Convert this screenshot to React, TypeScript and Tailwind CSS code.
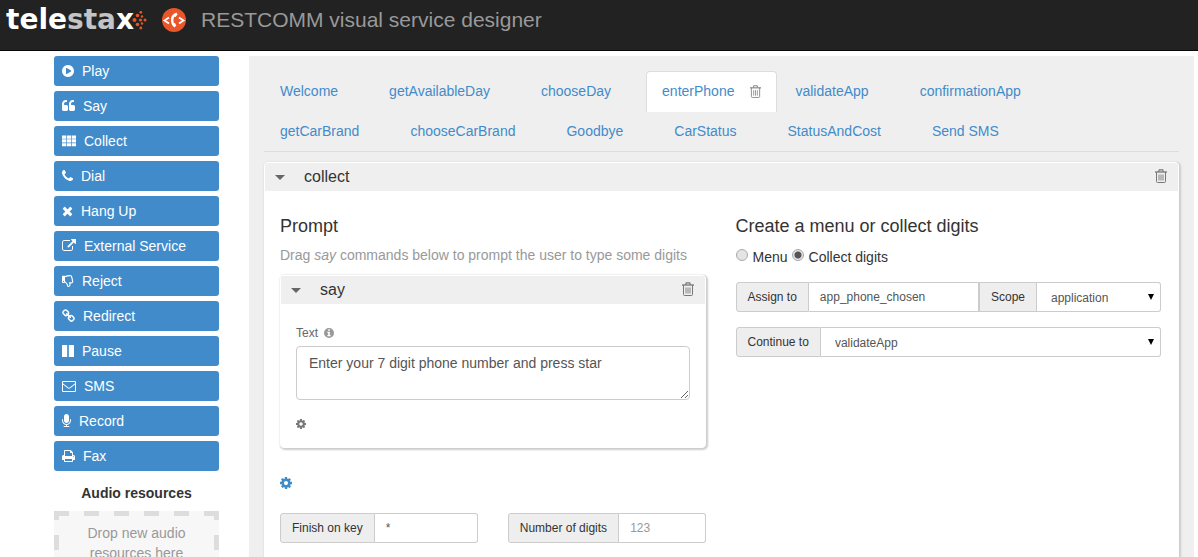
import React from "react";
import { FaRegThumbsDown } from "react-icons/fa";

const PATHS = {
  play: "M768 128q209 0 385.500 103t279.500 279.500 103 385.500-103 385.500-279.500 279.500-385.500 103-385.500-103-279.500-279.500-103-385.500 103-385.500 279.500-279.500 385.500-103zm384 823q32-18 32-55t-32-55l-544-320q-31-19-64-1-32 19-32 56v640q0 37 32 56 16 8 32 8 17 0 32-9z",
  quote:
    "M768 960v384q0 80-56 136t-136 56h-384q-80 0-136-56t-56-136v-704q0-104 40.5-198.5t109.5-163.5 163.5-109.5 198.5-40.5h64q26 0 45 19t19 45v128q0 26-19 45t-45 19h-64q-106 0-181 75t-75 181v32q0 40 28 68t68 28h224q80 0 136 56t56 136zm896 0v384q0 80-56 136t-136 56h-384q-80 0-136-56t-56-136v-704q0-104 40.5-198.5t109.5-163.5 163.5-109.5 198.5-40.5h64q26 0 45 19t19 45v128q0 26-19 45t-45 19h-64q-106 0-181 75t-75 181v32q0 40 28 68t68 28h224q80 0 136 56t56 136z",
  grid: "M0 192h540v400h-540zM626 192h540v400h-540zM1252 192h540v400h-540zM0 680h540v400h-540zM626 680h540v400h-540zM1252 680h540v400h-540zM0 1168h540v400h-540zM626 1168h540v400h-540zM1252 1168h540v400h-540z",
  phone:
    "M1408 1240q0 27-10 70.5t-21 68.5q-21 50-122 106-94 51-186 51-27 0-53-3.5t-57.5-12.5-47-14.5-55.5-20.5-49-18q-98-35-175-83-127-79-264-216t-216-264q-48-77-83-175-3-9-18-49t-20.5-55.5-14.5-47-12.5-57.5-3.5-53q0-92 51-186 56-101 106-122 25-11 68.5-21t70.5-10q14 0 21 3 18 6 53 76 11 19 30 54t35 63.5 31 53.5q3 4 17.5 25t21.5 35.500 7 28.5q0 20-28.5 50t-62 55-62 53-28.5 46q0 9 5 22.5t8.5 20.5 14 24 11.5 19q76 137 174 235t235 174q2 1 19 11.5t24 14 20.5 8.5 22.5 5q18 0 46-28.5t53-62 55-62 50-28.5q14 0 28.5 7t35.5 21.5 25 17.5q25 15 53.5 31t63.5 35 54 30q70 35 76 53 3 7 3 21z",
  times:
    "M1298 1322q0 40-28 68l-136 136q-28 28-68 28t-68-28l-294-294-294 294q-28 28-68 28t-68-28l-136-136q-28-28-28-68t28-68l294-294-294-294q-28-28-28-68t28-68l136-136q28-28 68-28t68 28l294 294 294-294q28-28 68-28t68 28l136 136q28 28 28 68t-28 68l-294 294 294 294q28 28 28 68z",
  external:
    "M1408 928v320q0 119-84.5 203.5t-203.5 84.5h-832q-119 0-203.5-84.5t-84.5-203.5v-832q0-119 84.5-203.5t203.5-84.5h704q14 0 23 9t9 23v64q0 14-9 23t-23 9h-704q-66 0-113 47t-47 113v832q0 66 47 113t113 47h832q66 0 113-47t47-113v-320q0-14 9-23t23-9h64q14 0 23 9t9 23zm384-864v512q0 26-19 45t-45 19-45-19l-176-176-652 652q-10 10-23 10t-23-10l-114-114q-10-10-10-23t10-23l652-652-176-176q-19-19-19-45t19-45 45-19h512q26 0 45 19t19 45z",
  link: "M1456 1216q0-40-28-68l-208-208q-28-28-68-28-42 0-72 32 3 3 19 18.5t21.5 21.5 15 19 13 25.5 3.5 27.5q0 40-28 68t-68 28q-15 0-27.5-3.5t-25.5-13-19-15-21.5-21.5-18.5-19q-33 31-33 73 0 40 28 68l206 207q27 27 68 27 40 0 68-26l147-146q28-28 28-67zm-703-705q0-40-28-68l-206-207q-28-28-68-28-39 0-68 27l-147 146q-28 28-28 67 0 40 28 68l208 208q27 27 68 27 42 0 72-31-3-3-19-18.5t-21.500-21.500-15-19-13-25.500-3.500-27.500q0-40 28-68t68-28q15 0 27.500 3.500t25.500 13 19 15 21.500 21.500 18.500 19q33-31 33-73zm895 705q0 120-85 203l-147 146q-83 83-203 83-121 0-204-85l-206-207q-83-83-83-203 0-123 88-209l-88-88q-86 88-208 88-120 0-204-84l-208-208q-84-84-84-204t85-203l147-146q83-83 203-83 121 0 204 85l206 207q83 83 83 203 0 123-88 209l88 88q86-88 208-88 120 0 204 84l208 208q84 84 84 204z",
  pause: "M0 128h660v1536h-660zM876 128h660v1536h-660z",
  mail: "M160 256h1472q160 0 160 160v1088q0 160-160 160h-1472q-160 0-160-160v-1088q0-160 160-160zM128 700v804q0 32 32 32h1472q32 0 32-32v-804l-610 490q-158 120-316 0zM128 384v120q0 60 60 110l620 476q88 68 176 0l620-476q60-50 60-110v-120z",
  mic: "M1152 704v128q0 221-147.5 384.5t-364.5 187.5v132h256q26 0 45 19t19 45-19 45-45 19h-640q-26 0-45-19t-19-45 19-45 45-19h256v-132q-217-24-364.5-187.5t-147.5-384.5v-128q0-26 19-45t45-19 45 19 19 45v128q0 185 131.5 316.5t316.5 131.5 316.5-131.5 131.5-316.5v-128q0-26 19-45t45-19 45 19 19 45zm-256-384v512q0 132-94 226t-226 94-226-94-94-226v-512q0-132 94-226t226-94 226 94 94 226z",
  print:
    "M384 1536h896v-256h-896v256zm0-640h896v-384h-160q-40 0-68-28t-28-68v-160h-640v640zm1152 64q0-26-19-45t-45-19-45 19-19 45 19 45 45 19 45-19 19-45zm128 0v416q0 13-9.5 22.5t-22.5 9.5h-224v160q0 40-28 68t-68 28h-960q-40 0-68-28t-28-68v-160h-224q-13 0-22.5-9.5t-9.5-22.5v-416q0-79 56.5-135.5t135.5-56.5h64v-544q0-40 28-68t68-28h672q40 0 88 20t76 48l152 152q28 28 48 76t20 88v256h64q79 0 135.5 56.5t56.5 135.5z",
  cog: "M1024 896q0-106-75-181t-181-75-181 75-75 181 75 181 181 75 181-75 75-181zm512-109v222q0 12-8 23t-20 13l-185 28q-19 54-39 91 35 50 107 138 10 12 10 25t-9 23q-27 37-99 108t-94 71q-12 0-26-9l-138-108q-44 23-91 38-16 136-29 186-7 28-36 28h-222q-14 0-24.5-8.5t-11.5-21.5l-28-184q-49-16-90-37l-141 107q-10 9-25 9-14 0-25-11-126-114-165-168-7-10-7-23 0-12 8-23 15-21 51-66.5t54-70.5q-27-50-41-99l-183-27q-13-2-21-12.5t-8-23.5v-222q0-12 8-23t19-13l186-28q14-46 39-92-40-57-107-138-10-12-10-24 0-10 9-23 26-36 98.5-107.5t94.5-71.5q13 0 26 10l138 107q44-23 91-38 16-136 29-186 7-28 36-28h222q14 0 24.5 8.5t11.5 21.5l28 184q49 16 90 37l142-107q9-9 24-9 13 0 25 10 129 119 165 170 7 8 7 22 0 12-8 23-15 21-51 66.500t-54 70.500q26 50 41 98l183 28q13 2 21 12.500t8 23.500z",
  info: "M768 128a768 768 0 1 0 0 1536a768 768 0 1 0 0-1536zM640 320h256v224h-256zM512 704h384v512h128v192h-512v-192h128v-320h-128z",
};

type IconName = keyof typeof PATHS;

function Icon({ name, units, className }: { name: IconName; units: number; className: string }) {
  return (
    <svg viewBox={`0 0 ${units} 1792`} className={`shrink-0 fill-current ${className}`} fillRule="evenodd" aria-hidden="true">
      <path d={PATHS[name]} />
    </svg>
  );
}

function Trash({ className }: { className: string }) {
  return (
    <svg viewBox="0 0 12 14" className={`shrink-0 ${className}`} fill="none" stroke="currentColor" aria-hidden="true">
      <path d="M0 3h12" strokeWidth="1.300" />
      <path d="M3.500 2.800L4.300 .8h3.400l.8 2" strokeWidth="1.200" />
      <path d="M1.500 3v9.500q0 1 1 1h7q1 0 1-1V3" />
      <path d="M4 5.500v6M6 5.500v6M8 5.500v6" strokeWidth="0.900" />
    </svg>
  );
}

const verbs: { label: string; icon: IconName | "reject"; units: number; size: string }[] = [
  { label: "Play", icon: "play", units: 1536, size: "w-3 h-3.5" },
  { label: "Say", icon: "quote", units: 1664, size: "w-[13px] h-3.5" },
  { label: "Collect", icon: "grid", units: 1792, size: "w-3.5 h-3.5" },
  { label: "Dial", icon: "phone", units: 1408, size: "w-[11px] h-3.5" },
  { label: "Hang Up", icon: "times", units: 1408, size: "w-[11px] h-3.5" },
  { label: "External Service", icon: "external", units: 1792, size: "w-3.5 h-3.5" },
  { label: "Reject", icon: "reject", units: 1536, size: "w-3 h-3.5" },
  { label: "Redirect", icon: "link", units: 1664, size: "w-[13px] h-3.5" },
  { label: "Pause", icon: "pause", units: 1536, size: "w-3 h-3.5" },
  { label: "SMS", icon: "mail", units: 1792, size: "w-3.5 h-3.5" },
  { label: "Record", icon: "mic", units: 1152, size: "w-[9px] h-3.5" },
  { label: "Fax", icon: "print", units: 1664, size: "w-[13px] h-3.5" },
];

const tabs = [
  "Welcome",
  "getAvailableDay",
  "chooseDay",
  "enterPhone",
  "validateApp",
  "confirmationApp",
  "getCarBrand",
  "chooseCarBrand",
  "Goodbye",
  "CarStatus",
  "StatusAndCost",
  "Send SMS",
];

function Header() {
  return (
    <header className="flex h-[51px] shrink-0 items-start border-b border-[#080808] bg-[#222]">
      <a href="#home" className="flex h-10 items-center pl-1.5" aria-label="telestax">
        <svg width="142" height="40" viewBox="0 0 142 40" aria-hidden="true">
          <g fill="#e2562a">
            <circle cx="128.500" cy="20" r="2" />
            <circle cx="131.500" cy="15.500" r="1.800" />
            <circle cx="131.500" cy="24.500" r="1.800" />
            <circle cx="134.500" cy="20" r="1.600" />
            <circle cx="134.800" cy="12.300" r="1.400" />
            <circle cx="134.800" cy="28" r="1.400" />
            <circle cx="136" cy="16.500" r="1.200" />
            <circle cx="136" cy="23.500" r="1.200" />
            <circle cx="139" cy="20" r="1.500" />
          </g>
          <text x="0" y="29" fontFamily="'DejaVu Sans', sans-serif" fontWeight="700" fontSize="28" fill="#fff">
            tele<tspan fill="#c4c4c4">sta</tspan>
            <tspan>x</tspan>
          </text>
        </svg>
      </a>
      <a href="#designer" className="flex h-10 items-center pl-3.5 text-[21px] text-[#999]">
        <svg viewBox="0 0 24 24" className="mr-[15px] h-6 w-6" aria-hidden="true">
          <circle cx="12" cy="12" r="12" fill="#e9562a" />
          <path d="M7 9.500l-4.500 3 4.500 3M17 9.500l4.500 3-4.500 3" fill="none" stroke="#fff" strokeWidth="1.800" />
          <path d="M14.500 4.500q-6 2-5.500 8 .3 5 3.500 7l1.800-2-1.300-2.500-1.200.3q-1-3 .2-6.500l1.500.2 2-2.500z" fill="#fff" />
        </svg>
        RESTCOMM visual service designer
      </a>
    </header>
  );
}

function Sidebar() {
  return (
    <aside className="w-[165px] shrink-0">
      <div className="flex flex-col gap-[5px]">
        {verbs.map((v) => (
          <button key={v.label} type="button" className="flex h-[30px] items-center gap-2 rounded-[3px] bg-[#428bca] px-2 text-white">
            {v.icon === "reject" ? (
              <FaRegThumbsDown className="h-3.5 w-3" />
            ) : (
              <Icon name={v.icon} units={v.units} className={v.size} />
            )}
            {v.label}
          </button>
        ))}
      </div>
      <h2 className="mt-3 text-center font-bold">Audio resources</h2>
      <div className="relative mt-2 h-24 bg-[#f7f7f7] px-5 pt-3 text-center text-[#999]">
        <svg className="absolute inset-0 h-full w-full" fill="none" stroke="#ddd" aria-hidden="true">
          <path d="M0 2.500h165" strokeWidth="5" strokeDasharray="15" />
          <path d="M2.500 0v96M162.500 0v96" strokeWidth="5" strokeDasharray="9 15 15 15" />
        </svg>
        Drop new audio resources here
      </div>
    </aside>
  );
}

function StepHeader({ title }: { title: string }) {
  return (
    <div className="flex h-7 items-center rounded-t-[3px] bg-[#efefef] pr-[11px] pl-2.5 text-base">
      <button type="button" aria-label={`Collapse ${title}`} className="mr-[19px] h-[5px] w-2.5">
        <svg viewBox="0 0 10 5" className="h-[5px] w-2.5 fill-[#666]" aria-hidden="true">
          <path d="M0 0h10L5 5z" />
        </svg>
      </button>
      <h3>{title}</h3>
      <button type="button" aria-label={`Delete ${title}`} className="ml-auto pb-0.5 text-[#777]">
        <Trash className="h-3.5 w-3" />
      </button>
    </div>
  );
}

const addon = "flex items-center border border-[#ccc] bg-[#eee] px-[11px] whitespace-nowrap";
const field = "min-w-0 flex-1 border border-l-0 border-[#ccc] bg-white px-[11px] text-[#555] outline-none";
const card = "rounded border border-white bg-white shadow-[1px_1px_2px_1px_#ccc]";

function Select({ id, value, className }: { id: string; value: string; className: string }) {
  return (
    <div className={`relative flex ${className}`}>
      <select id={id} defaultValue={value} className={`${field} appearance-none rounded-r-[3px] pt-0.5 pl-3.5`}>
        <option>{value}</option>
      </select>
      <svg viewBox="0 0 6 6" className="pointer-events-none absolute top-3 right-[7px] h-1.5 w-1.5" aria-hidden="true">
        <path d="M0 0h6L3 6z" />
      </svg>
    </div>
  );
}

export default function App() {
  return (
    <div className="flex h-screen flex-col overflow-y-auto bg-white font-['Liberation_Sans',Arial,sans-serif] text-sm leading-5 text-[#333] [scrollbar-width:none]">
      <Header />
      <div className="flex gap-[30px] pt-[5px] pr-1 pl-[54px]">
        <Sidebar />
        <main className="min-w-0 flex-1 bg-[#efefef] px-[15px] pt-[15px] pb-4">
          <nav className="flex flex-wrap border-b border-[#ddd]">
            {tabs.map((t) =>
              t === "enterPhone" ? (
                <div key={t} className="mr-0.5 -mb-px flex h-[41px] items-center gap-4 rounded-t border border-b-0 border-[#ddd] bg-white px-[15px] pb-0.5 text-[#428bca]">
                  <a href="#enterPhone">{t}</a>
                  <button type="button" aria-label="Delete enterPhone" className="text-[#888]">
                    <Trash className="h-[13px] w-[11px]" />
                  </button>
                </div>
              ) : (
                <a key={t} href={`#${t}`} className="mr-0.5 -mb-px flex h-[41px] items-center pr-[33px] pb-0.5 pl-4 text-[#428bca]">
                  {t}
                </a>
              ),
            )}
          </nav>

          <section className={`mt-2.5 ${card}`}>
            <StepHeader title="collect" />
            <div className="flex gap-[30px] pt-[25px] pr-[17px] pb-10 pl-[15px]">
              <div className="min-w-0 flex-1">
                <h4 className="text-lg leading-5">Prompt</h4>
                <p className="mt-[9px] text-[#999]">
                  Drag <em>say</em> commands below to prompt the user to type some digits
                </p>
                <section className={`mt-2.5 ${card}`}>
                  <StepHeader title="say" />
                  <div className="px-[15px] pt-[19px] pb-[17px]">
                    <label htmlFor="say-text" className="flex items-center gap-1.5 text-xs leading-5 text-[#666]">
                      Text <Icon name="info" units={1536} className="h-3 w-2.5 text-[#999]" />
                    </label>
                    <textarea
                      id="say-text"
                      defaultValue="Enter your 7 digit phone number and press star"
                      className="mt-[3px] block h-[54px] w-full resize rounded border border-[#ccc] px-3 py-1.5 text-[#555] outline-none"
                    />
                    <button type="button" aria-label="Say options" className="mt-[18px] flex text-[#777]">
                      <Icon name="cog" units={1536} className="h-3 w-2.5" />
                    </button>
                  </div>
                </section>
                <button type="button" aria-label="Collect options" className="mt-7 flex text-[#428bca]">
                  <Icon name="cog" units={1536} className="h-3.5 w-3" />
                </button>
                <div className="mt-[23px] flex gap-[30px] text-xs">
                  <div className="flex h-[30px] min-w-0 flex-1">
                    <label htmlFor="finish" className={`${addon} rounded-l-[3px]`}>
                      Finish on key
                    </label>
                    <input id="finish" defaultValue="*" className={`${field} rounded-r-[3px]`} />
                  </div>
                  <div className="flex h-[30px] min-w-0 flex-1">
                    <label htmlFor="digits" className={`${addon} rounded-l-[3px]`}>
                      Number of digits
                    </label>
                    <input id="digits" placeholder="123" className={`${field} rounded-r-[3px] placeholder:text-[#999]`} />
                  </div>
                </div>
              </div>

              <div className="min-w-0 flex-1">
                <h4 className="text-lg leading-5">Create a menu or collect digits</h4>
                <div className="mt-[11px] flex items-center">
                  {["Menu", "Collect digits"].map((label) => (
                    <label key={label} className="mr-1 flex items-center">
                      <input
                        type="radio"
                        name="mode"
                        defaultChecked={label !== "Menu"}
                        className="mr-[5px] mb-1 h-3 w-3 appearance-none rounded-full border border-[#aaa] bg-[#e4e4e4] checked:bg-[radial-gradient(circle,#555_3px,#e4e4e4_4px)]"
                      />
                      {label}
                    </label>
                  ))}
                </div>
                <div className="mt-[15px] flex h-[30px] text-xs">
                  <label htmlFor="assign" className={`${addon} rounded-l-[3px]`}>
                    Assign to
                  </label>
                  <input id="assign" defaultValue="app_phone_chosen" className={field} />
                  <label htmlFor="scope" className={addon}>
                    Scope
                  </label>
                  <Select id="scope" value="application" className="w-[124px]" />
                </div>
                <div className="mt-[15px] flex h-[30px] text-xs">
                  <label htmlFor="next" className={`${addon} rounded-l-[3px]`}>
                    Continue to
                  </label>
                  <Select id="next" value="validateApp" className="flex-1" />
                </div>
              </div>
            </div>
          </section>
        </main>
      </div>
    </div>
  );
}
